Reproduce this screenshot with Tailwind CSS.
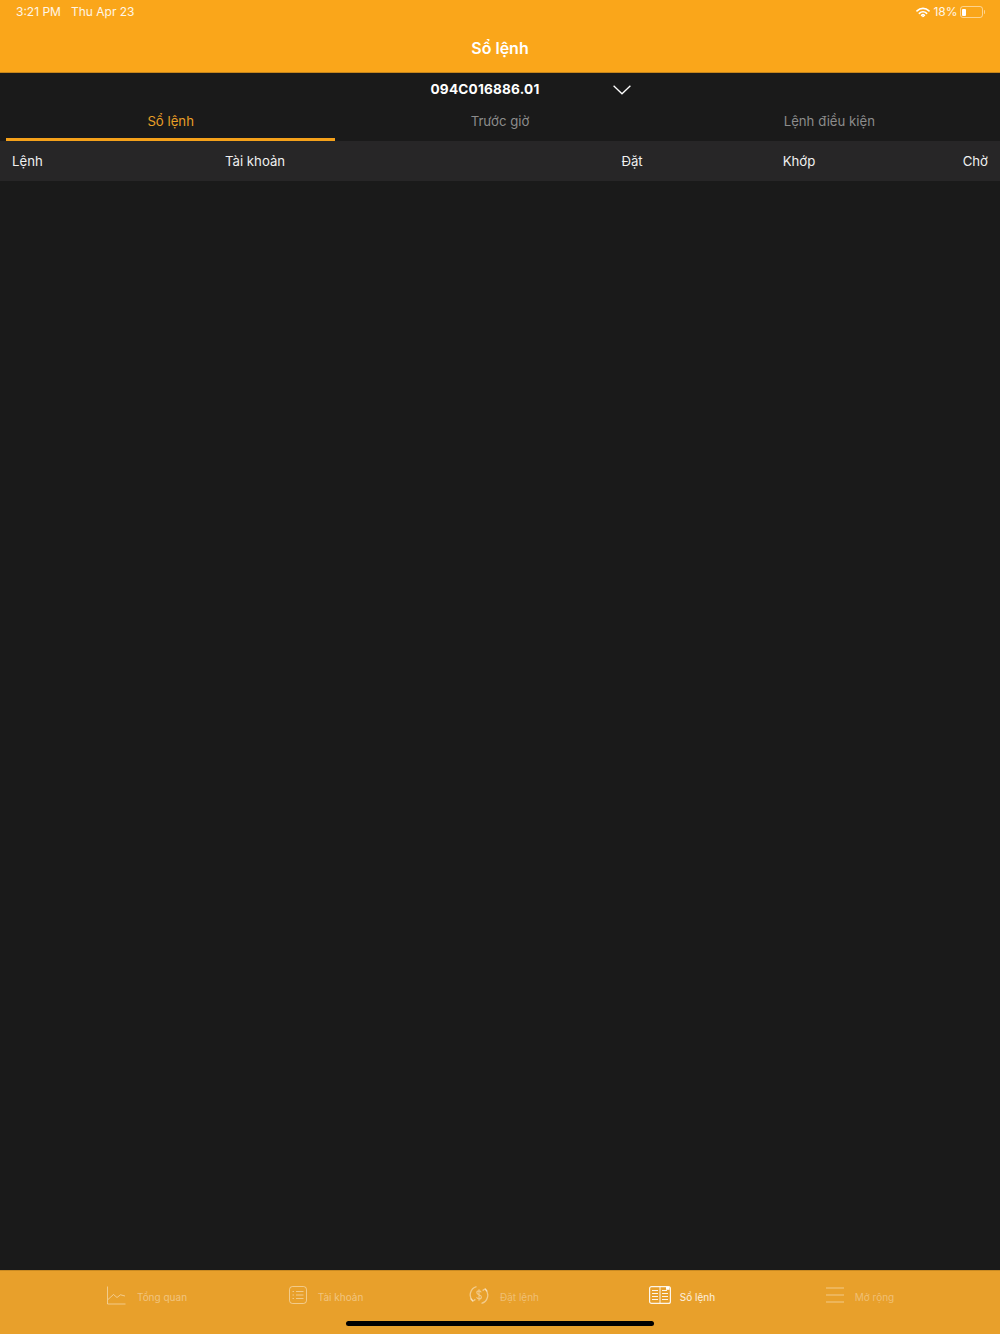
<!DOCTYPE html>
<html lang="vi">
<head>
    <meta charset="UTF-8">
    <meta name="viewport" content="width=device-width, initial-scale=1.0">
    <script src="https://cdn.jsdelivr.net/npm/@tailwindcss/browser@4"></script>
    <title>Sổ lệnh</title>
</head>
<body class="bg-[#1a1a1a]">
<div class="relative w-[1000px] h-[1334px] flex flex-col overflow-hidden bg-[#1a1a1a] text-white font-['Inter',sans-serif]">

  <!-- Header -->
  <header class="h-[73px] shrink-0 bg-[#faa61a] border-b border-[#c5851c]">
    <div class="h-6 flex items-center justify-between pl-4 pr-[15px] text-[12px] leading-none text-white/90">
      <div class="flex gap-[10px]"><span>3:21 PM</span><span>Thu Apr 23</span></div>
      <div class="flex items-center">
        <svg class="w-[14px] h-[11px] mr-[3px]" viewBox="0 0 16 12" fill="none" stroke="white" stroke-width="1.9" stroke-linecap="round">
          <path d="M1.2 4.2a9.6 9.6 0 0 1 13.6 0"/>
          <path d="M3.8 6.9a6 6 0 0 1 8.4 0"/>
          <path d="M6.4 9.2a2.3 2.3 0 0 1 3.2 0"/>
          <circle cx="8" cy="10.6" r=".5" fill="white" stroke-width="1"/>
        </svg>
        <span>18%</span>
        <div class="ml-[2px] w-[23px] h-[12px] rounded-[3px] border border-white/50 p-[1.5px]">
          <div class="w-[4px] h-full rounded-[1px] bg-white"></div>
        </div>
        <div class="ml-[1px] w-[1.5px] h-[4px] rounded-r-sm bg-white/50"></div>
      </div>
    </div>
    <h1 class="h-12 flex items-center justify-center text-[16px] font-semibold">Sổ lệnh</h1>
  </header>

  <!-- Account select -->
  <div class="h-[32px] shrink-0 relative flex items-center justify-center">
    <span class="text-[13.6px] font-bold tracking-[0.2px] -ml-[30px]">094C016886.01</span>
    <svg class="absolute left-[613px] top-[12px] w-[18px] h-[10px]" viewBox="0 0 18 10" fill="none" stroke="white" stroke-width="1.3">
      <path d="M.6.8 9 8.8 17.4.8"/>
    </svg>
  </div>

  <!-- Tabs -->
  <nav class="h-[36px] shrink-0 grid grid-cols-3 px-[6px] text-[13.2px]">
    <div class="flex items-center justify-center border-b-[3px] border-[#f5a11a] text-[#e89f27]">Sổ lệnh</div>
    <div class="flex items-center justify-center text-[#8c8c8c] pb-[3px]">Trước giờ</div>
    <div class="flex items-center justify-center text-[#8c8c8c] pb-[3px]">Lệnh điều kiện</div>
  </nav>

  <!-- Table header -->
  <div class="h-[40px] shrink-0 flex items-center px-3 pt-[1px] bg-[#272627] text-[13.2px] text-[#f0f0f0]">
    <div class="w-[213px]">Lệnh</div>
    <div class="w-[362px]">Tài khoản</div>
    <div class="w-[90px] text-center">Đặt</div>
    <div class="w-[90px] ml-[77px] text-center">Khớp</div>
    <div class="ml-auto">Chờ</div>
  </div>

  <main class="flex-1"></main>

  <!-- Bottom tab bar -->
  <footer class="h-[64px] shrink-0 bg-[#e8a02b] border-t border-[#c98a22] pt-[14px] text-[10px]">
    <div class="w-[890px] ml-[59px] grid grid-cols-5">
      <div class="flex items-center justify-center gap-[11px] text-white/40 -ml-[2px]">
        <svg class="w-[19px] h-[19px]" viewBox="0 0 19 19" fill="none" stroke="white" stroke-opacity=".45" stroke-width="1">
          <path d="M.5.5v17.5h18"/>
          <path d="M1 13.5 6.5 8.5 10 11.5 13.5 8.8 18 10"/>
        </svg>
        <span class="mt-[4px]">Tổng quan</span>
      </div>
      <div class="flex items-center justify-center gap-[11px] text-white/40">
        <svg class="w-[18px] h-[18px]" viewBox="0 0 18 18" fill="none" stroke="white" stroke-opacity=".45" stroke-width="1">
          <rect x=".5" y=".5" width="17" height="17" rx="3"/>
          <path d="M7 5.5h7.5M7 9h7.5M7 12.5h7.5M3.5 5.5h1.5M3.5 9h1.5M3.5 12.5h1.5" stroke-width="1.2"/>
        </svg>
        <span class="mt-[4px]">Tài khoản</span>
      </div>
      <div class="flex items-center justify-center gap-[11px] text-white/35">
        <svg class="w-[20px] h-[20px]" viewBox="0 0 20 20" fill="none" stroke="white" stroke-opacity=".45" stroke-width="1.3">
          <path d="M7.5 1.6A8.6 8.6 0 0 0 3.8 16"/>
          <path d="M1.8 13.6 3.8 16.2 6.4 14.4"/>
          <path d="M12.5 18.4A8.6 8.6 0 0 0 16.2 4"/>
          <path d="M18.2 6.4 16.2 3.8 13.6 5.6"/>
          <path d="M12.2 7.4c-.3-1-1.1-1.5-2.2-1.5-1.3 0-2.2.7-2.2 1.8 0 2.6 4.6 1.5 4.6 4.2 0 1.2-1 2-2.4 2-1.2 0-2.1-.6-2.4-1.7M10 4.2v11.6" stroke-width="1.1"/>
        </svg>
        <span class="mt-[4px]">Đặt lệnh</span>
      </div>
      <div class="flex items-center justify-center gap-[9px] text-white/85">
        <svg class="w-[22px] h-[18px]" viewBox="0 0 22 18" fill="none" stroke="white" stroke-opacity=".9">
          <rect x=".6" y=".6" width="20.8" height="16.8" rx="2" stroke-width="1.2"/>
          <path d="M11 1v16" stroke-width="1"/>
          <path d="M3 4.5h6M3 7.5h6M3 10.5h6M3 13.5h6M13 4.5h5M13 7.5h6M13 10.5h6M13 13.5h6" stroke-width="1.2"/>
          <path d="M17 .8h3.5v3H17z" fill="white" stroke="none"/>
        </svg>
        <span class="mt-[4px]">Sổ lệnh</span>
      </div>
      <div class="flex items-center justify-center gap-[11px] text-white/35">
        <svg class="w-[18px] h-[16px]" viewBox="0 0 18 16" fill="none" stroke="white" stroke-opacity=".45" stroke-width="1.2">
          <path d="M0 1h18M0 8h18M0 15h18"/>
        </svg>
        <span class="mt-[4px]">Mở rộng</span>
      </div>
    </div>
  </footer>

  <!-- Home indicator -->
  <div class="absolute left-[346px] bottom-[8px] w-[308px] h-[5px] rounded-full bg-black"></div>
</div>
</body>
</html>
